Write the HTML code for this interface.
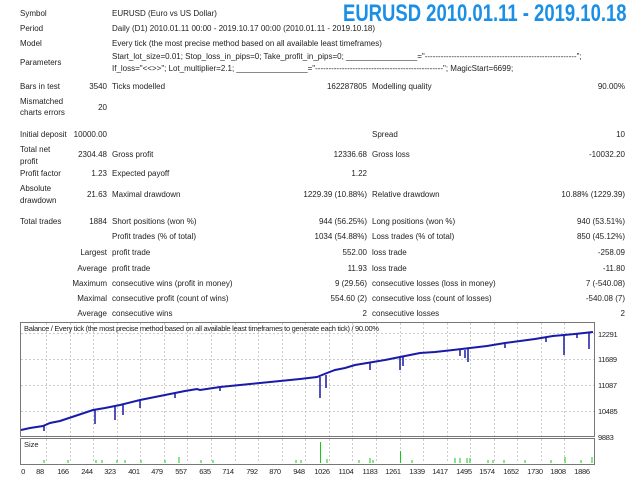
<!DOCTYPE html>
<html><head><meta charset="utf-8"><style>
body{margin:0;width:640px;height:480px;background:#fff;position:relative;overflow:hidden;font-family:"Liberation Sans",sans-serif;font-size:8px;letter-spacing:0;color:#222}
div.t{position:absolute;white-space:nowrap;line-height:12px}
.r{text-align:right}
#title{position:absolute;left:343px;top:0px;font-size:24px;font-weight:bold;color:#1a8fe6;white-space:nowrap;letter-spacing:0;transform:scaleX(0.77);transform-origin:0 0}
</style></head><body>
<div id="title">EURUSD 2010.01.11 - 2019.10.18</div>
<div class="t" style="left:20px;top:8px">Symbol</div>
<div class="t" style="left:112px;top:8px">EURUSD (Euro vs US Dollar)</div>
<div class="t" style="left:20px;top:23px">Period</div>
<div class="t" style="left:112px;top:23px">Daily (D1) 2010.01.11 00:00 - 2019.10.17 00:00 (2010.01.11 - 2019.10.18)</div>
<div class="t" style="left:20px;top:38px">Model</div>
<div class="t" style="left:112px;top:38px">Every tick (the most precise method based on all available least timeframes)</div>
<div class="t" style="left:20px;top:57px">Parameters</div>
<div class="t" style="left:112px;top:51px">Start_lot_size=0.01; Stop_loss_in_pips=0; Take_profit_in_pips=0; ________________="---------------------------------------------------------";</div>
<div class="t" style="left:112px;top:63px">If_loss="&lt;&lt;&gt;&gt;"; Lot_multiplier=2.1; ________________="------------------------------------------------"; MagicStart=6699;</div>

<div class="t" style="left:20px;top:81px">Bars in test</div>
<div class="t r" style="left:60px;width:47px;top:81px">3540</div>
<div class="t" style="left:112px;top:81px">Ticks modelled</div>
<div class="t r" style="left:250px;width:117px;top:81px">162287805</div>
<div class="t" style="left:372px;top:81px">Modelling quality</div>
<div class="t r" style="left:500px;width:125px;top:81px">90.00%</div>

<div class="t" style="left:20px;top:96px;line-height:11px">Mismatched<br>charts errors</div>
<div class="t r" style="left:60px;width:47px;top:102px">20</div>

<div class="t" style="left:20px;top:129px">Initial deposit</div>
<div class="t r" style="left:60px;width:47px;top:129px">10000.00</div>
<div class="t" style="left:372px;top:129px">Spread</div>
<div class="t r" style="left:500px;width:125px;top:129px">10</div>

<div class="t" style="left:20px;top:144px;line-height:12px">Total net<br>profit</div>
<div class="t r" style="left:60px;width:47px;top:149px">2304.48</div>
<div class="t" style="left:112px;top:149px">Gross profit</div>
<div class="t r" style="left:250px;width:117px;top:149px">12336.68</div>
<div class="t" style="left:372px;top:149px">Gross loss</div>
<div class="t r" style="left:500px;width:125px;top:149px">-10032.20</div>

<div class="t" style="left:20px;top:168px">Profit factor</div>
<div class="t r" style="left:60px;width:47px;top:168px">1.23</div>
<div class="t" style="left:112px;top:168px">Expected payoff</div>
<div class="t r" style="left:250px;width:117px;top:168px">1.22</div>

<div class="t" style="left:20px;top:183px;line-height:12px">Absolute<br>drawdown</div>
<div class="t r" style="left:60px;width:47px;top:189px">21.63</div>
<div class="t" style="left:112px;top:189px">Maximal drawdown</div>
<div class="t r" style="left:250px;width:117px;top:189px">1229.39 (10.88%)</div>
<div class="t" style="left:372px;top:189px">Relative drawdown</div>
<div class="t r" style="left:500px;width:125px;top:189px">10.88% (1229.39)</div>

<div class="t" style="left:20px;top:216px">Total trades</div>
<div class="t r" style="left:60px;width:47px;top:216px">1884</div>
<div class="t" style="left:112px;top:216px">Short positions (won %)</div>
<div class="t r" style="left:250px;width:117px;top:216px">944 (56.25%)</div>
<div class="t" style="left:372px;top:216px">Long positions (won %)</div>
<div class="t r" style="left:500px;width:125px;top:216px">940 (53.51%)</div>

<div class="t" style="left:112px;top:231px">Profit trades (% of total)</div>
<div class="t r" style="left:250px;width:117px;top:231px">1034 (54.88%)</div>
<div class="t" style="left:372px;top:231px">Loss trades (% of total)</div>
<div class="t r" style="left:500px;width:125px;top:231px">850 (45.12%)</div>

<div class="t r" style="left:40px;width:67px;top:247px">Largest</div>
<div class="t" style="left:112px;top:247px">profit trade</div>
<div class="t r" style="left:250px;width:117px;top:247px">552.00</div>
<div class="t" style="left:372px;top:247px">loss trade</div>
<div class="t r" style="left:500px;width:125px;top:247px">-258.09</div>

<div class="t r" style="left:40px;width:67px;top:263px">Average</div>
<div class="t" style="left:112px;top:263px">profit trade</div>
<div class="t r" style="left:250px;width:117px;top:263px">11.93</div>
<div class="t" style="left:372px;top:263px">loss trade</div>
<div class="t r" style="left:500px;width:125px;top:263px">-11.80</div>

<div class="t r" style="left:40px;width:67px;top:278px">Maximum</div>
<div class="t" style="left:112px;top:278px">consecutive wins (profit in money)</div>
<div class="t r" style="left:250px;width:117px;top:278px">9 (29.56)</div>
<div class="t" style="left:372px;top:278px">consecutive losses (loss in money)</div>
<div class="t r" style="left:500px;width:125px;top:278px">7 (-540.08)</div>

<div class="t r" style="left:40px;width:67px;top:293px">Maximal</div>
<div class="t" style="left:112px;top:293px">consecutive profit (count of wins)</div>
<div class="t r" style="left:250px;width:117px;top:293px">554.60 (2)</div>
<div class="t" style="left:372px;top:293px">consecutive loss (count of losses)</div>
<div class="t r" style="left:500px;width:125px;top:293px">-540.08 (7)</div>

<div class="t r" style="left:40px;width:67px;top:308px">Average</div>
<div class="t" style="left:112px;top:308px">consecutive wins</div>
<div class="t r" style="left:250px;width:117px;top:308px">2</div>
<div class="t" style="left:372px;top:308px">consecutive losses</div>
<div class="t r" style="left:500px;width:125px;top:308px">2</div>

<svg style="position:absolute;left:0;top:0" width="640" height="480">
<g stroke="#ccc" stroke-dasharray="2,2" stroke-width="1">
<line x1="21" y1="333.5" x2="594" y2="333.5"/><line x1="21" y1="359.5" x2="594" y2="359.5"/>
<line x1="21" y1="385.5" x2="594" y2="385.5"/><line x1="21" y1="411.5" x2="594" y2="411.5"/>
<path d="M46.5 323V463M70.5 323V463M93.5 323V463M117.5 323V463M140.5 323V463M164.5 323V463M187.5 323V463M211.5 323V463M235.5 323V463M258.5 323V463M282.5 323V463M305.5 323V463M329.5 323V463M352.5 323V463M376.5 323V463M400.5 323V463M423.5 323V463M447.5 323V463M470.5 323V463M494.5 323V463M517.5 323V463M541.5 323V463M564.5 323V463"/>
</g>
<rect x="20.5" y="322.5" width="574" height="114" fill="none" stroke="#777"/>
<rect x="20.5" y="438.5" width="574" height="26" fill="none" stroke="#777"/>
<text x="24" y="331" font-size="7.5" fill="#222" font-family="Liberation Sans" letter-spacing="-0.3">Balance / Every tick (the most precise method based on all available least timeframes to generate each tick) / 90.00%</text>
<text x="24" y="447" font-size="7.5" fill="#222" font-family="Liberation Sans">Size</text>
<g font-size="7.5" fill="#222" font-family="Liberation Sans" letter-spacing="-0.3">
<text x="598" y="337">12291</text><text x="598" y="362">11689</text><text x="598" y="388">11087</text><text x="598" y="414">10485</text><text x="598" y="440">9883</text>
</g>
<g font-size="7.5" fill="#222" font-family="Liberation Sans" text-anchor="middle" letter-spacing="-0.3">
<text x="23" y="474">0</text><text x="40" y="474">88</text><text x="63" y="474">166</text><text x="87" y="474">244</text><text x="110" y="474">323</text><text x="134" y="474">401</text><text x="157" y="474">479</text><text x="181" y="474">557</text><text x="205" y="474">635</text><text x="228" y="474">714</text><text x="252" y="474">792</text><text x="275" y="474">870</text><text x="299" y="474">948</text><text x="322" y="474">1026</text><text x="346" y="474">1104</text><text x="370" y="474">1183</text><text x="393" y="474">1261</text><text x="417" y="474">1339</text><text x="440" y="474">1417</text><text x="464" y="474">1495</text><text x="487" y="474">1574</text><text x="511" y="474">1652</text><text x="535" y="474">1730</text><text x="558" y="474">1808</text><text x="582" y="474">1886</text>
</g>
<polyline fill="none" stroke="#1a1aa8" stroke-width="2" points="21,430 30,428 43,426 50,423 60,421 75,416 93,410 105,408 120,405 140,400 155,397 170,394 185,391 197,389 200,390 220,387 240,385 260,383 280,381 300,379 317,377 327,373 335,370 345,368 355,365 367,363 385,360 400,357 410,355 420,353 435,352 453,350 470,348 487,346 505,343 520,341 535,339 553,336 575,334 593,332"/>
<path stroke="#1a1aa8" stroke-width="1.5" fill="none" d="M44 425V431M95 410V424M115 407V420M123 405V415M140 400V408M175 393V398M220 387V391M320 377V398M326 375V388M370 363V370M400 357V370M403 357V366M460 350V356M465 350V358M468 349V362M505 344V348M546 337V342M564 335V355M577 333V338M589 333V349"/>
<path stroke="#1c1" stroke-width="1" fill="none" d="M44 463V460M68 463V460M96 463V460M102 463V460M117 463V460M125 463V460M141 463V460M165 463V460M179 463V457M201 463V460M213 463V460M296 463V460M301 463V460M320.5 463V442M327 463V459M359 463V460M370 463V458M373 463V460M400.5 463V451M412 463V460M455 463V458M460 463V458M467 463V458M470 463V458M488 463V460M493 463V460M504 463V460M525 463V460M551 463V460M565 463V457M581 463V460M592 463V457"/>
</svg>
</body></html>
